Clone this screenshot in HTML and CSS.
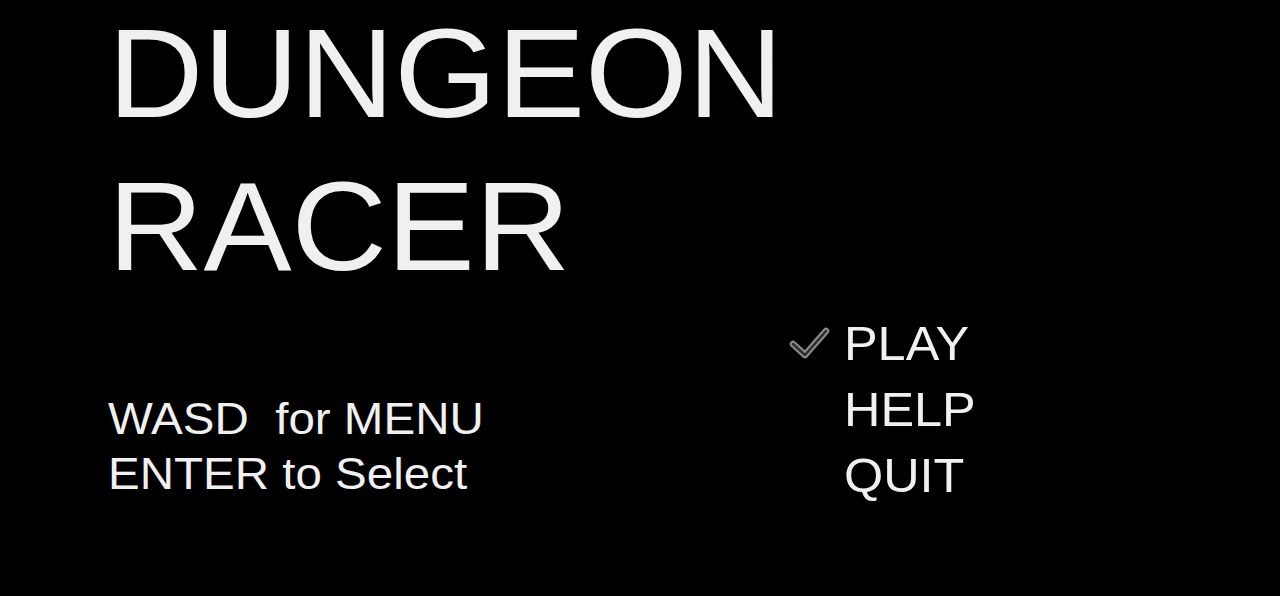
FILE: index.html
```html
<!DOCTYPE html>
<html>
<head>
<meta charset="utf-8">
<link rel="stylesheet" href="styles.css">
</head>
<body>
<div class="screen">
  <h1 class="title">DUNGEON<br>RACER</h1>
  <div class="lower">
    <div class="help-text">
      <div class="help-line">WASD&nbsp; for MENU</div>
      <div class="help-line">ENTER to Select</div>
    </div>
    <ul class="menu">
      <li class="item selected">
        <span class="mark">
          <svg width="44" height="36" viewBox="0 0 44 36">
            <polyline points="5,20 17,31 38,7" fill="none" stroke="#8a8a8a" stroke-width="6.5" stroke-linecap="round" stroke-linejoin="round"/>
            <polyline points="5,20 17,31 38,7" fill="none" stroke="#2e2e2e" stroke-width="2.5" stroke-linecap="round" stroke-linejoin="round"/>
          </svg>
        </span>
        <span class="label">PLAY</span>
      </li>
      <li class="item"><span class="mark"></span><span class="label">HELP</span></li>
      <li class="item"><span class="mark"></span><span class="label">QUIT</span></li>
    </ul>
  </div>
</div>
</body>
</html>
```
FILE: styles.css
```css
html, body {
  margin: 0;
  padding: 0;
  background: #000;
}
body {
  width: 1280px;
  height: 596px;
  overflow: hidden;
  font-family: "Liberation Sans", Arial, sans-serif;
  color: #f0f0f0;
}
.screen {
  padding-left: 108px;
}
.title {
  margin: -3px 0 0 0;
  font-size: 127px;
  font-weight: normal;
  line-height: 153px;
  transform: scaleX(1.04);
  transform-origin: left top;
}
.lower {
  display: flex;
  align-items: flex-start;
}
.help-text {
  margin-top: 88px;
  width: 680px;
  font-size: 45px;
  line-height: 55px;
}
.help-line {
  white-space: nowrap;
  transform: scaleX(1.056);
  transform-origin: left center;
}
.menu {
  list-style: none;
  margin: 8px 0 0 0;
  padding: 0;
  font-size: 48px;
  line-height: 66px;
}
.item {
  display: flex;
  align-items: center;
}
.mark {
  width: 56px;
  height: 66px;
  display: flex;
  align-items: center;
}
.mark svg {
  display: block;
  margin-top: -4px;
}
.label {
  display: block;
  transform: scaleX(1.05);
  transform-origin: left center;
}
```
